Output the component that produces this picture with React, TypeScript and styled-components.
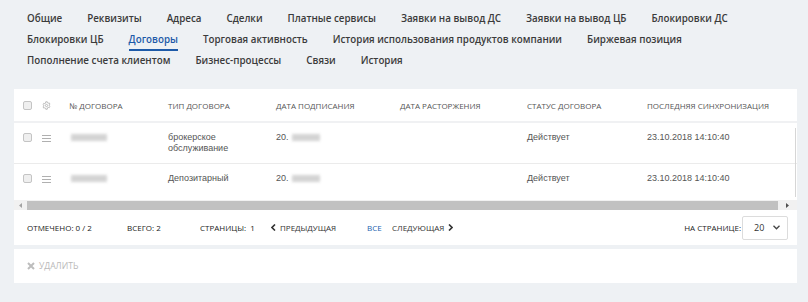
import styled, { createGlobalStyle } from "styled-components";

const GlobalStyle = createGlobalStyle`
  html, body {
    margin: 0;
    padding: 0;
    background: #eef1f4;
  }
  body {
    font-family: "Open Sans", "Liberation Sans", sans-serif;
    color: #333;
  }
`;

const Page = styled.div`
  width: 808px;
  height: 302px;
  overflow: hidden;
`;

const Tabs = styled.nav`
  padding: 8px 0 0 27px;
`;

const TabRow = styled.div`
  display: flex;
  column-gap: 25px;
  height: 21px;
  align-items: center;
`;

const Tab = styled.span<{ $active?: boolean }>`
  position: relative;
  font-size: 9.8px;
  font-weight: 600;
  white-space: nowrap;
  color: ${(p) => (p.$active ? "#1d5aa8" : "#3b3b3b")};
  &::after {
    content: "";
    display: ${(p) => (p.$active ? "block" : "none")};
    position: absolute;
    left: 0;
    right: 0;
    bottom: -5px;
    height: 2px;
    background: #1d5aa8;
  }
`;

const Card = styled.section`
  margin: 18px 11px 0 14px;
  background: #fff;
`;

const cols = "19px 27px 99px 108px 124px 127px 120px 1fr";

const HeadRow = styled.div`
  display: grid;
  grid-template-columns: ${cols};
  align-items: center;
  height: 32px;
  padding-left: 9px;
  border-bottom: 2px solid #f0f1f3;
`;

const HeadCell = styled.div`
  font-size: 8px;
  text-transform: uppercase;
  color: #555;
  white-space: nowrap;
`;

const Body = styled.div`
  position: relative;
`;

const Row = styled.div<{ $last?: boolean }>`
  display: grid;
  grid-template-columns: ${cols};
  align-items: start;
  min-height: 33px;
  box-sizing: border-box;
  padding: 9px 0 9px 9px;
  border-bottom: ${(p) => (p.$last ? "none" : "1px solid #ebebeb")};
`;

const Cell = styled.div`
  font-family: "Liberation Sans", Arial, sans-serif;
  font-size: 9px;
  line-height: 11px;
  color: #555;
  display: flex;
  align-items: center;
  min-height: 11px;
`;

const VTrack = styled.div`
  position: absolute;
  right: 1px;
  top: 5px;
  bottom: 0;
  width: 1px;
  background: #d6d6d6;
`;

const Check = styled.span`
  display: inline-block;
  width: 7px;
  height: 7px;
  border: 1px solid #c4c4c4;
  border-radius: 2px;
  background: #efefef;
`;

const Blur = styled.span<{ $w: number }>`
  display: inline-block;
  width: ${(p) => p.$w}px;
  height: 7px;
  background: #cfcfcf;
  filter: blur(1.5px);
  opacity: 0.9;
`;

const HScroll = styled.div`
  display: flex;
  align-items: center;
  height: 10px;
  margin-top: 3px;
  background: #f1f1f1;
`;

const ArrowBtn = styled.span`
  width: 13px;
  display: flex;
  justify-content: center;
`;

const Thumb = styled.div`
  flex: 1;
  height: 9px;
  background: #c1c1c1;
`;

const Footer = styled.div`
  display: flex;
  align-items: center;
  height: 35px;
  padding: 0 9px 0 13px;
  font-size: 8px;
  text-transform: uppercase;
  color: #222;
  border-bottom: 4px solid #eef1f4;
`;

const Stat = styled.span<{ $w: number }>`
  width: ${(p) => p.$w}px;
  white-space: nowrap;
`;

const PageLink = styled.span<{ $blue?: boolean; $w?: number }>`
  display: inline-flex;
  align-items: center;
  gap: 4px;
  white-space: nowrap;
  color: ${(p) => (p.$blue ? "#2462b0" : "#333")};
  ${(p) => (p.$w ? `width: ${p.$w}px;` : "")}
`;

const Spacer = styled.span`
  flex: 1;
`;

const Select = styled.div`
  display: flex;
  align-items: center;
  justify-content: space-between;
  box-sizing: border-box;
  width: 46px;
  height: 24px;
  margin-left: 1px;
  padding: 0 7px 0 11px;
  border: 1px solid #dcdcdc;
  border-radius: 2px;
  font-size: 9px;
  color: #333;
`;

const Actions = styled.div`
  display: flex;
  align-items: center;
  gap: 4px;
  height: 34px;
  padding-left: 13px;
  font-size: 8.6px;
  text-transform: uppercase;
  color: #b9b9b9;
`;

const Gear = () => (
  <svg width="9" height="9" viewBox="0 0 24 24" fill="none" stroke="#b5b5b5" strokeWidth="2.4" strokeLinejoin="round">
    <path d="M10 2h4l.6 2.8 2 1.1 2.7-.9 2 3.4-2.1 1.9v2.3l2.1 1.9-2 3.4-2.7-.9-2 1.1L14 22h-4l-.6-2.8-2-1.1-2.7.9-2-3.4 2.1-1.9v-2.3L2.7 9.5l2-3.4 2.7.9 2-1.1z" />
    <circle cx="12" cy="12" r="3" />
  </svg>
);

const Burger = () => (
  <svg width="9" height="8" viewBox="0 0 9 8" stroke="#b0b0b0" strokeWidth="1">
    <path d="M0 1.5h9M0 4.5h9M0 7.5h9" />
  </svg>
);

const Chevron = ({ dir }: { dir: "l" | "r" }) => (
  <svg width="5" height="7" viewBox="0 0 5 7" fill="none" stroke="#333" strokeWidth="1.6">
    <path d={dir === "l" ? "M4 0.5L1 3.5L4 6.5" : "M1 0.5L4 3.5L1 6.5"} />
  </svg>
);

const tabs = [
  ["Общие", "Реквизиты", "Адреса", "Сделки", "Платные сервисы", "Заявки на вывод ДС", "Заявки на вывод ЦБ", "Блокировки ДС"],
  ["Блокировки ЦБ", "Договоры", "Торговая активность", "История использования продуктов компании", "Биржевая позиция"],
  ["Пополнение счета клиентом", "Бизнес-процессы", "Связи", "История"],
];

const headers = ["№ договора", "Тип договора", "Дата подписания", "Дата расторжения", "Статус договора", "Последняя синхронизация"];

const rows = [
  { type: ["брокерское", "обслуживание"], status: "Действует", sync: "23.10.2018 14:10:40" },
  { type: ["Депозитарный"], status: "Действует", sync: "23.10.2018 14:10:40" },
];

function App() {
  return (
    <Page>
      <GlobalStyle />
      <Tabs>
        {tabs.map((row, i) => (
          <TabRow key={i}>
            {row.map((t) => (
              <Tab key={t} $active={t === "Договоры"}>{t}</Tab>
            ))}
          </TabRow>
        ))}
      </Tabs>
      <Card>
        <HeadRow>
          <Check />
          <Gear />
          {headers.map((h) => (
            <HeadCell key={h}>{h}</HeadCell>
          ))}
        </HeadRow>
        <Body>
          {rows.map((r, i) => (
            <Row key={i} $last={i === rows.length - 1}>
              <Cell><Check /></Cell>
              <Cell><Burger /></Cell>
              <Cell><Blur $w={36} style={{ marginLeft: 2 }} /></Cell>
              <Cell style={{ display: "block" }}>
                {r.type.map((t) => (
                  <div key={t}>{t}</div>
                ))}
              </Cell>
              <Cell>20.<Blur $w={28} style={{ marginLeft: 3 }} /></Cell>
              <Cell />
              <Cell>{r.status}</Cell>
              <Cell>{r.sync}</Cell>
            </Row>
          ))}
          <VTrack />
        </Body>
        <HScroll>
          <ArrowBtn>
            <svg width="3" height="5" viewBox="0 0 3 5"><path d="M3 0L0 2.5L3 5z" fill="#a3a3a3" /></svg>
          </ArrowBtn>
          <Thumb />
          <ArrowBtn style={{ width: 19 }}>
            <svg width="3" height="5" viewBox="0 0 3 5"><path d="M0 0L3 2.5L0 5z" fill="#505050" /></svg>
          </ArrowBtn>
        </HScroll>
        <Footer>
          <Stat $w={100}>Отмечено: 0 / 2</Stat>
          <Stat $w={73}>Всего: 2</Stat>
          <Stat $w={71}>Страницы:&nbsp; 1</Stat>
          <PageLink $w={96}><Chevron dir="l" />Предыдущая</PageLink>
          <PageLink $blue $w={25}>Все</PageLink>
          <PageLink>Следующая<Chevron dir="r" /></PageLink>
          <Spacer />
          <span>На странице:</span>
          <Select>
            <span>20</span>
            <svg width="7" height="5" viewBox="0 0 7 5" fill="none" stroke="#444" strokeWidth="1.3">
              <path d="M0.5 0.8L3.5 3.8L6.5 0.8" />
            </svg>
          </Select>
        </Footer>
        <Actions>
          <svg width="8" height="8" viewBox="0 0 8 8" stroke="#bdbdbd" strokeWidth="2">
            <path d="M1 1L7 7M7 1L1 7" />
          </svg>
          Удалить
        </Actions>
      </Card>
    </Page>
  );
}

export default App;
